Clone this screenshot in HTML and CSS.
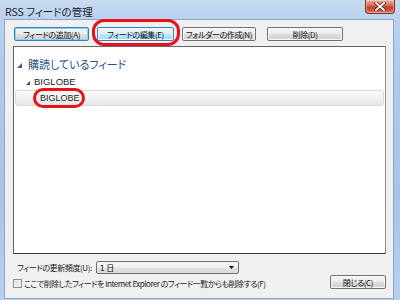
FILE: index.html
```html
<!DOCTYPE html>
<html lang="ja">
<head>
<meta charset="utf-8">
<link rel="stylesheet" href="styles.css">
</head>
<body>
<div class="window">
  <div class="titlebar">
    <span class="title">RSS フィードの管理</span>
    <div class="close">
      <svg width="12" height="9" viewBox="0 0 12 9"><path d="M2 1 L10 8 M10 1 L2 8" stroke="#5a2018" stroke-width="3.2" stroke-linecap="square"/><path d="M2 1 L10 8 M10 1 L2 8" stroke="#ffffff" stroke-width="1.8" stroke-linecap="square"/></svg>
    </div>
  </div>
  <div class="client">
    <div class="toolbar">
      <button class="btn btn-focus b-add">フィードの追加(A)</button>
      <span class="mark">
        <button class="btn btn-hot b-edit">フィードの編集(E)</button>
        <span class="ring ring-btn"></span>
      </span>
      <button class="btn b-folder">フォルダーの作成(N)</button>
      <button class="btn b-del">削除(D)</button>
    </div>
    <div class="list">
      <div class="node root">
        <svg class="tri" width="5" height="5" viewBox="0 0 5 5"><path d="M5 0 L5 5 L0 5 Z" fill="#5b5b5b"/></svg>
        <span>購読しているフィード</span>
      </div>
      <div class="node folder">
        <svg class="tri" width="4" height="4" viewBox="0 0 4 4"><path d="M4 0 L4 4 L0 4 Z" fill="#4a4a4a"/></svg>
        <span>BIGLOBE</span>
      </div>
      <div class="node item">
        <span class="mark">BIGLOBE<span class="ring ring-item"></span></span>
      </div>
    </div>
    <div class="footer">
      <div class="opts">
        <div class="freq">
          <span class="freq-label">フィードの更新頻度(U):</span>
          <div class="select">
            <span>1 日</span>
            <svg width="5" height="3" viewBox="0 0 5 3"><path d="M0 0 L5 0 L2.5 3 Z" fill="#000"/></svg>
          </div>
        </div>
        <label class="check">
          <span class="box"></span>
          <span>ここで削除したフィードを Internet Explorer のフィード一覧からも削除する(F)</span>
        </label>
      </div>
      <button class="btn b-close">閉じる(C)</button>
    </div>
  </div>
</div>
</body>
</html>
```

FILE: styles.css
```css
* { box-sizing: border-box; }
html, body { margin: 0; padding: 0; }
body {
  width: 400px;
  height: 300px;
  overflow: hidden;
  font-family: "Noto Sans CJK JP", "Liberation Sans", sans-serif;
  font-feature-settings: "palt";
}
.window {
  width: 400px;
  height: 300px;
  background: linear-gradient(to bottom, #c8dbf1 0px, #bad2ef 18px, #aecbec 60px, #a6c4ea 200px, #b7d0ee 300px);
  display: flex;
  flex-direction: column;
}
.titlebar {
  height: 19px;
  display: flex;
  align-items: flex-start;
  justify-content: space-between;
  padding-left: 5px;
  padding-right: 5px;
}
.title {
  font-size: 10.5px;
  line-height: 12px;
  margin-top: 6px;
  color: #1b1b1b;
}
.close {
  width: 30px;
  height: 14px;
  border: 1px solid #7a2f25;
  border-top: none;
  border-radius: 0 0 4px 4px;
  background: linear-gradient(to bottom, #eab0a3 0%, #d86e5c 40%, #c5402a 55%, #cf5a3e 85%, #e0906e 100%);
  display: flex;
  align-items: center;
  justify-content: center;
  box-shadow: inset 0 0 0 1px rgba(255,255,255,0.35);
}
.client {
  margin: 0 6px 1px 4px;
  height: 280px;
  background: #f0f0f0;
  border: 1px solid #8ea4c0;
  padding: 7px 7px 0 8px;
  display: flex;
  flex-direction: column;
}
.toolbar {
  display: flex;
  align-items: flex-start;
  gap: 8px;
  padding-left: 1px;
  height: 13px;
}
.btn {
  font-family: inherit;
  font-feature-settings: "palt";
  font-size: 8px;
  letter-spacing: -0.4px;
  line-height: 11px;
  white-space: nowrap;
  color: #111;
  padding: 0;
  margin: 0;
  height: 14px;
  border: 1px solid #707070;
  border-radius: 2px;
  background: linear-gradient(to bottom, #f4f4f4 0%, #ebebeb 50%, #dddddd 51%, #cfcfcf 100%);
  box-shadow: inset 0 0 0 1px #fbfbfb;
}
.btn-focus {
  border-color: #3c7fb1;
  box-shadow: inset 0 0 0 1px #7fd8f8;
}
.btn-hot {
  border-color: #3c7fb1;
  background: linear-gradient(to bottom, #eaf6fd 0%, #d9f0fc 50%, #bee6fd 51%, #a7d9f5 100%);
  box-shadow: inset 0 0 0 1px #f4fbfe;
}
.b-add { width: 75px; }
.b-edit { width: 77px; }
.b-folder { width: 74px; }
.b-del { width: 76px; margin-left: 3px; }
.mark {
  position: relative;
  display: flex;
}
.ring {
  position: absolute;
  border: 3px solid #e8121a;
  pointer-events: none;
}
.ring-btn {
  left: -5px;
  right: -6px;
  top: -8px;
  bottom: -5px;
  border-radius: 12px;
}
.list {
  margin-top: 6px;
  height: 208px;
  background: #ffffff;
  border: 1px solid #646464;
  border-right-color: #8a8a8a;
  border-bottom-color: #3a3a3a;
  padding: 10px 1px 0 1px;
}
.node {
  display: flex;
  align-items: center;
}
.root {
  height: 14px;
  padding-left: 2px;
  gap: 6px;
  font-size: 11px;
  line-height: 14px;
  color: #2b4f8c;
}
.root .tri { margin-top: 2px; }
.folder {
  margin-top: 4px;
  height: 14px;
  padding-left: 11px;
  gap: 4px;
  font-family: "Liberation Sans", sans-serif;
  font-size: 9.5px;
  line-height: 14px;
  color: #222;
}
.folder .tri { margin-top: 1px; }
.item {
  margin-top: 1px;
  height: 16px;
  border: 1px solid #dadada;
  border-radius: 3px;
  background: linear-gradient(to bottom, #f9fafa 0%, #f1f2f2 50%, #e6e6e6 100%);
  padding-left: 24px;
  font-family: "Liberation Sans", sans-serif;
  font-size: 9px;
  line-height: 14px;
  color: #222;
}
.ring-item {
  left: -7px;
  right: -5px;
  top: -3px;
  bottom: -3px;
  border-radius: 10px;
}
.footer {
  display: flex;
  justify-content: space-between;
  align-items: flex-end;
  margin-top: 7px;
}
.opts {
  display: flex;
  flex-direction: column;
  gap: 4px;
}
.freq {
  display: flex;
  align-items: center;
  height: 13px;
}
.freq-label {
  font-size: 8px;
  letter-spacing: -0.4px;
  line-height: 12px;
  white-space: nowrap;
  color: #1a1a1a;
  padding-left: 4px;
  width: 83px;
}
.select {
  width: 143px;
  height: 13px;
  border: 1px solid #707070;
  border-radius: 2px;
  background: linear-gradient(to bottom, #f6f6f6 0%, #eeeeee 50%, #e2e2e2 51%, #d8d8d8 100%);
  display: flex;
  align-items: center;
  justify-content: space-between;
  padding: 0 4px 0 3px;
  font-size: 8px;
  line-height: 11px;
}
.check {
  display: flex;
  align-items: center;
  gap: 2px;
  font-size: 8px;
  letter-spacing: -0.5px;
  line-height: 11px;
  white-space: nowrap;
  color: #1a1a1a;
  height: 11px;
}
.box {
  width: 9px;
  height: 9px;
  flex: none;
  border: 1px solid #8e8f8f;
  background: linear-gradient(135deg, #dcdcdc 0%, #f4f4f4 100%);
  box-shadow: inset 0 0 0 1px #f0f0f0;
}
.b-close {
  width: 56px;
  height: 14px;
}
```
